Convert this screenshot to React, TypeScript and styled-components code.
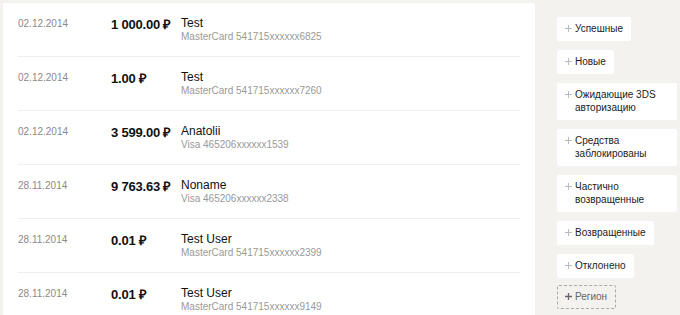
import { FC } from 'react';
import styled, { createGlobalStyle } from 'styled-components';

const Global = createGlobalStyle`
  html, body {
    margin: 0;
    padding: 0;
    background: #f3f2ef;
    font-family: "Liberation Sans", Arial, sans-serif;
  }
`;

const Page = styled.div`
  display: flex;
  align-items: flex-start;
  gap: 22px;
  padding: 3px 0 0 3px;
  height: 312px;
  overflow: hidden;
`;

const Panel = styled.div`
  width: 532px;
  background: #fff;
  border-radius: 2px;
  padding: 0 15px;
  box-sizing: border-box;
`;

const Row = styled.div`
  display: grid;
  grid-template-columns: 93px 70px 1fr;
  align-items: start;
  height: 54px;
  box-sizing: border-box;
  padding-top: 13px;
  border-bottom: 1px solid #efefed;
`;

const Date = styled.div`
  font-size: 10px;
  line-height: 12px;
  color: #8a8a8a;
  padding-top: 2px;
`;

const Amount = styled.div`
  font-size: 13px;
  line-height: 15px;
  font-weight: bold;
  color: #111;
  white-space: nowrap;
  letter-spacing: -0.2px;
  padding-top: 1px;
`;

const Payer = styled.div`
  display: flex;
  flex-direction: column;
  padding-top: 1px;
`;

const Name = styled.div`
  font-size: 12px;
  line-height: 13px;
  color: #111;
`;

const Card = styled.div`
  font-size: 10px;
  line-height: 12px;
  color: #999;
  padding-top: 1px;
`;

const Side = styled.div`
  display: flex;
  flex-direction: column;
  align-items: flex-start;
  gap: 9px;
  padding-top: 14px;
`;

const Filter = styled.div<{ $dashed?: boolean }>`
  display: flex;
  align-items: flex-start;
  gap: 3px;
  max-width: 120px;
  box-sizing: border-box;
  padding: ${p => (p.$dashed ? '4px 8px 5px 7px' : '5px 8px 6px 8px')};
  margin-top: ${p => (p.$dashed ? '-2px' : '0')};
  font-size: 10px;
  line-height: 13px;
  color: ${p => (p.$dashed ? '#666' : '#222')};
  background: ${p => (p.$dashed ? 'transparent' : '#fff')};
  border: ${p => (p.$dashed ? '1px dashed #aaa' : 'none')};
  border-radius: 2px;
`;

const Plus = styled.svg<{ $dark?: boolean }>`
  flex: none;
  width: 7px;
  height: 7px;
  margin-top: 3px;
  stroke: ${p => (p.$dark ? '#666' : '#bbb')};
`;

const rows = [
  ['02.12.2014', '1 000.00 ₽', 'Test', 'MasterCard 541715xxxxxx6825'],
  ['02.12.2014', '1.00 ₽', 'Test', 'MasterCard 541715xxxxxx7260'],
  ['02.12.2014', '3 599.00 ₽', 'Anatolii', 'Visa 465206xxxxxx1539'],
  ['28.11.2014', '9 763.63 ₽', 'Noname', 'Visa 465206xxxxxx2338'],
  ['28.11.2014', '0.01 ₽', 'Test User', 'MasterCard 541715xxxxxx2399'],
  ['28.11.2014', '0.01 ₽', 'Test User', 'MasterCard 541715xxxxxx9149'],
];

const filters = [
  'Успешные',
  'Новые',
  'Ожидающие 3DS авторизацию',
  'Средства заблокированы',
  'Частично возвращенные',
  'Возвращенные',
  'Отклонено',
];

const PlusIcon: FC<{ dark?: boolean }> = ({ dark }) => (
  <Plus $dark={dark} viewBox="0 0 7 7" strokeWidth={dark ? 1.3 : 1}>
    <path d="M3.5 0V7M0 3.5H7" />
  </Plus>
);

export default function App() {
  return (
    <>
      <Global />
      <Page>
        <Panel>
          {rows.map(([d, a, n, c], i) => (
            <Row key={i}>
              <Date>{d}</Date>
              <Amount>{a}</Amount>
              <Payer>
                <Name>{n}</Name>
                <Card>{c}</Card>
              </Payer>
            </Row>
          ))}
        </Panel>
        <Side>
          {filters.map(f => (
            <Filter key={f}>
              <PlusIcon />
              <span>{f}</span>
            </Filter>
          ))}
          <Filter $dashed>
            <PlusIcon dark />
            <span>Регион</span>
          </Filter>
        </Side>
      </Page>
    </>
  );
}
